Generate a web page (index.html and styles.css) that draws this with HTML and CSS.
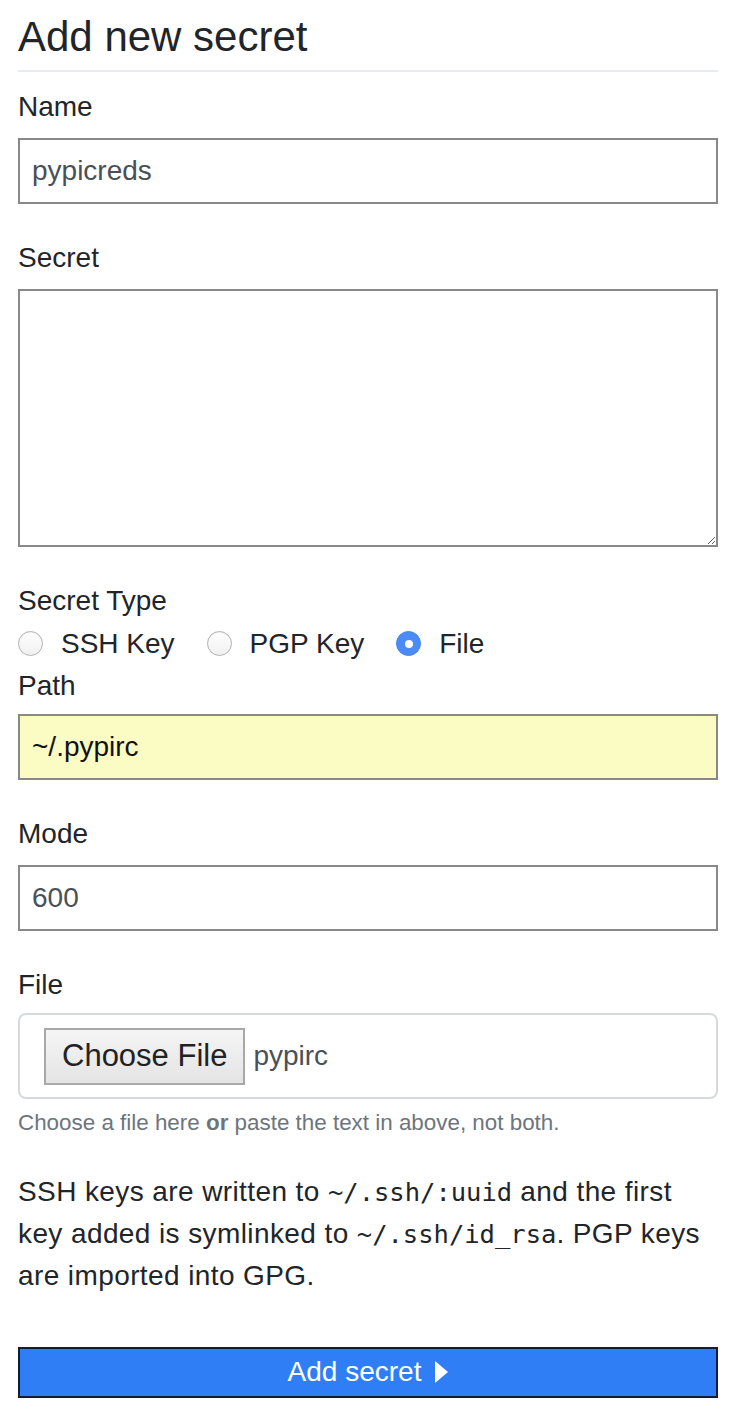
FILE: index.html
```html
<!DOCTYPE html>
<html lang="en">
<head>
<meta charset="utf-8">
<title>Add new secret</title>
<link rel="stylesheet" href="styles.css">
</head>
<body>
<div class="page">
  <h3 class="title">Add new secret</h3>
  <form class="form">
    <div class="group">
      <label class="label" for="name">Name</label>
      <input class="control" id="name" type="text" value="pypicreds">
    </div>
    <div class="group">
      <label class="label" for="secret">Secret</label>
      <textarea class="control area" id="secret"></textarea>
    </div>
    <div class="type-group">
      <div class="label flush">Secret Type</div>
      <div class="radios">
        <label class="radio"><span class="dot"></span>SSH Key</label>
        <label class="radio"><span class="dot"></span>PGP Key</label>
        <label class="radio"><span class="dot on"></span>File</label>
      </div>
    </div>
    <div class="group">
      <label class="label tight" for="path">Path</label>
      <input class="control autofill" id="path" type="text" value="~/.pypirc">
    </div>
    <div class="group">
      <label class="label" for="mode">Mode</label>
      <input class="control" id="mode" type="text" value="600">
    </div>
    <div class="group file-group">
      <div class="label tight">File</div>
      <div class="filebox">
        <span class="choose">Choose File</span>
        <span class="filename">pypirc</span>
      </div>
      <small class="help">Choose a file here <b>or</b> paste the text in above, not both.</small>
    </div>
    <p class="note">SSH keys are written to <code>~/.ssh/:uuid</code> and the first key added is symlinked to <code>~/.ssh/id_rsa</code>. PGP keys are imported into GPG.</p>
    <button class="submit" type="button">Add secret
      <svg class="caret" width="13" height="22" viewBox="0 0 13 22"><polygon points="0,0 13,11 0,22" fill="#fff"/></svg>
    </button>
  </form>
</div>
</body>
</html>
```
FILE: styles.css
```css
html, body {
  margin: 0;
  padding: 0;
  background: #fff;
}
body {
  font-family: "Liberation Sans", Arial, Helvetica, sans-serif;
  font-size: 28px;
  line-height: 1.5;
  color: #212529;
}
.page {
  padding: 12px 20px 0 18px;
}
.title {
  margin: 0 0 14px;
  font-size: 42px;
  font-weight: 400;
  line-height: 50px;
  padding-bottom: 8px;
  border-bottom: 2px solid #e9ecef;
}
.form {
  margin: 0;
}
.group {
  margin-bottom: 33px;
}
.label {
  display: block;
  line-height: 42px;
  margin-bottom: 10px;
}
.label.flush {
  margin-bottom: 0;
}
.label.tight {
  margin-bottom: 7px;
}
.control {
  display: block;
  width: 100%;
  box-sizing: border-box;
  height: 66px;
  margin: 0;
  padding: 0 12px;
  border: 2px solid #898989;
  border-radius: 0;
  background: #fff;
  font: inherit;
  color: #495057;
  outline: none;
}
.area {
  height: 258px;
  resize: both;
}
.autofill {
  background: #fafcc4;
  color: #111;
}
.type-group {
  margin-bottom: 0;
}
.radios {
  display: flex;
  align-items: center;
  gap: 32px;
  height: 43px;
}
.radio {
  display: flex;
  align-items: center;
  gap: 18px;
  line-height: 40px;
}
.dot {
  width: 25px;
  height: 25px;
  box-sizing: border-box;
  border-radius: 50%;
  border: 1px solid #b3b3b3;
  background: linear-gradient(#ffffff, #f0f0f0);
  box-shadow: inset 0 1px 1px rgba(0,0,0,0.06);
  display: flex;
  align-items: center;
  justify-content: center;
}
.dot.on {
  background: #4a8bf5;
  border-color: #4485f2;
  box-shadow: none;
}
.dot.on::after {
  content: "";
  width: 8px;
  height: 8px;
  border-radius: 50%;
  background: #fff;
}
.file-group {
  margin-bottom: 31px;
}
.filebox {
  display: flex;
  align-items: center;
  gap: 8px;
  height: 86px;
  box-sizing: border-box;
  border: 2px solid #d6dade;
  border-radius: 8px;
  padding: 0 24px;
}
.choose {
  display: flex;
  align-items: center;
  box-sizing: border-box;
  height: 57px;
  padding: 0 16px;
  border: 2px solid #a8a8a8;
  background: linear-gradient(#f5f5f5, #e4e4e4);
  font-size: 31px;
  color: #222;
}
.filename {
  color: #495057;
}
.help {
  display: block;
  margin-top: 7px;
  font-size: 22.4px;
  line-height: 1.5;
  color: #6c757d;
}
.help b {
  font-weight: 700;
}
.note {
  margin: 0 0 50px;
  letter-spacing: 0.4px;
}
.note code {
  font-family: "DejaVu Sans Mono", "Liberation Mono", monospace;
  font-size: 25.5px;
  letter-spacing: 0;
  color: inherit;
}
.submit {
  display: flex;
  align-items: center;
  justify-content: center;
  gap: 14px;
  width: 100%;
  height: 51px;
  box-sizing: border-box;
  margin: 0;
  padding: 0;
  border: 2px solid #0b1d38;
  background: #2f7ef5;
  color: #fff;
  font: inherit;
  line-height: 1;
}
.caret {
  display: block;
}
```
